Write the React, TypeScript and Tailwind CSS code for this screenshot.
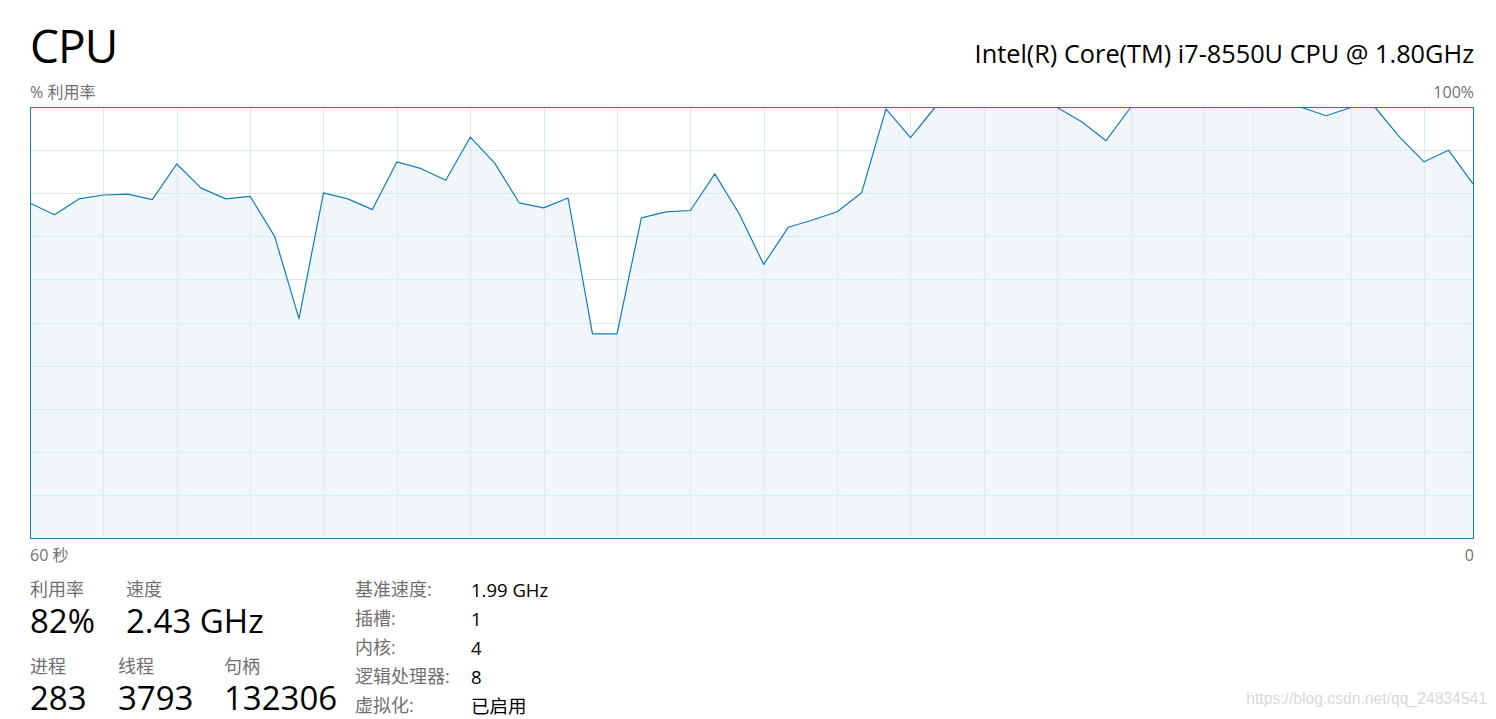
import React from "react";

// 60 samples, one per second, oldest first (percent)
const usage = [
  77.8, 75.1, 78.8, 79.7, 79.9, 78.6, 86.9, 81.3, 78.8, 79.4,
  70.1, 51.0, 80.2, 78.8, 76.3, 87.4, 85.8, 83.1, 93.1, 87.1,
  77.9, 76.7, 79.0, 47.5, 47.5, 74.4, 75.8, 76.1, 84.6, 75.3,
  63.6, 72.2, 73.9, 75.8, 80.2, 99.7, 93.0, 100, 100, 100,
  100, 100, 100, 96.7, 92.3, 100, 100, 100, 100, 100,
  100, 100, 100, 98.1, 100, 100, 93.1, 87.4, 90.1, 82.3,
];

const W = 1443;
const H = 431;

const vLines = [73, 147, 220, 293, 367, 440, 514, 587, 660, 734, 807, 880, 954, 1027, 1101, 1174, 1223, 1321, 1394];
const hLines = [1, 2, 3, 4, 5, 6, 7, 8, 9].map((k) => Math.round((H / 10) * k));

const UsageChart = () => {
  const step = W / (usage.length - 1);
  const pts = usage.map((v, i) => `${(i * step).toFixed(1)},${(H - (v / 100) * H + 0.5).toFixed(1)}`);
  const area = `0,${H} ${pts.join(" ")} ${W},${H}`;

  return (
    <svg width={W + 1} height={H + 1} className="block">
      <rect x={0} y={0} width={W + 1} height={H + 1} fill="#ffffff" />
      <polygon points={area} fill="#f1f6fa" />
      {vLines.map((x) => (
        <line key={`v${x}`} x1={x + 0.5} y1={0} x2={x + 0.5} y2={H} stroke="#d9eaf4" strokeWidth={1} />
      ))}
      {hLines.map((y) => (
        <line key={`h${y}`} x1={0} y1={y + 0.5} x2={W} y2={y + 0.5} stroke="#d9eaf4" strokeWidth={1} />
      ))}
      <polyline points={pts.join(" ")} fill="none" stroke="#117dbb" strokeWidth={1.2} strokeLinejoin="round" />
      <rect x={0.5} y={0.5} width={W} height={H} fill="none" stroke="#117dbb" strokeWidth={1} />
    </svg>
  );
};

const Stat = ({ label, value, width }: { label: string; value: string; width: string }) => (
  <div className={width}>
    <div className="text-[18px] leading-[20px] text-[#707070]">{label}</div>
    <div className="mt-[7px] text-[33px] leading-[30px] text-black">{value}</div>
  </div>
);

const specs = [
  ["基准速度:", "1.99 GHz"],
  ["插槽:", "1"],
  ["内核:", "4"],
  ["逻辑处理器:", "8"],
  ["虚拟化:", "已启用"],
];

export default function App() {
  return (
    <div
      className="relative h-[719px] w-[1496px] overflow-hidden bg-white pl-[30px] pr-[22px]"
      style={{ fontFamily: '"Segoe UI", "Open Sans", "Noto Sans CJK SC", sans-serif' }}
    >
      {/* header */}
      <div className="flex items-baseline justify-between pt-[22px]">
        <div className="text-[46px] leading-none tracking-[-1px] text-black">CPU</div>
        <div className="text-[25.3px] leading-none text-black">Intel(R) Core(TM) i7-8550U CPU @ 1.80GHz</div>
      </div>

      <div className="mt-[14px] flex justify-between text-[16px] leading-[20px] text-[#707070]">
        <span>% 利用率</span>
        <span>100%</span>
      </div>

      <div className="mt-[5px]">
        <UsageChart />
      </div>

      <div className="mt-[6px] flex justify-between text-[16px] leading-[20px] text-[#707070]">
        <span>60 秒</span>
        <span>0</span>
      </div>

      {/* stats */}
      <div className="mt-[10px] flex">
        <div className="w-[325px] pt-[4px]">
          <div className="flex">
            <Stat label="利用率" value="82%" width="w-[96px]" />
            <Stat label="速度" value="2.43 GHz" width="w-[180px]" />
          </div>
          <div className="mt-[20px] flex">
            <Stat label="进程" value="283" width="w-[88px]" />
            <Stat label="线程" value="3793" width="w-[106px]" />
            <Stat label="句柄" value="132306" width="w-[120px]" />
          </div>
        </div>
        <div className="flex flex-col">
          {specs.map(([k, v]) => (
            <div key={k} className="flex text-[18px] leading-[29px]">
              <span className="w-[116px] text-[#707070]">{k}</span>
              <span className="text-[18.5px] text-black">{v}</span>
            </div>
          ))}
        </div>
      </div>

      <div
        className="absolute right-[9px] top-[691px] text-[15.7px] leading-[16px] text-[#d9d9d9]"
        style={{ fontFamily: '"Liberation Sans", Arial, sans-serif' }}
      >
        https://blog.csdn.net/qq_24834541
      </div>
    </div>
  );
}
